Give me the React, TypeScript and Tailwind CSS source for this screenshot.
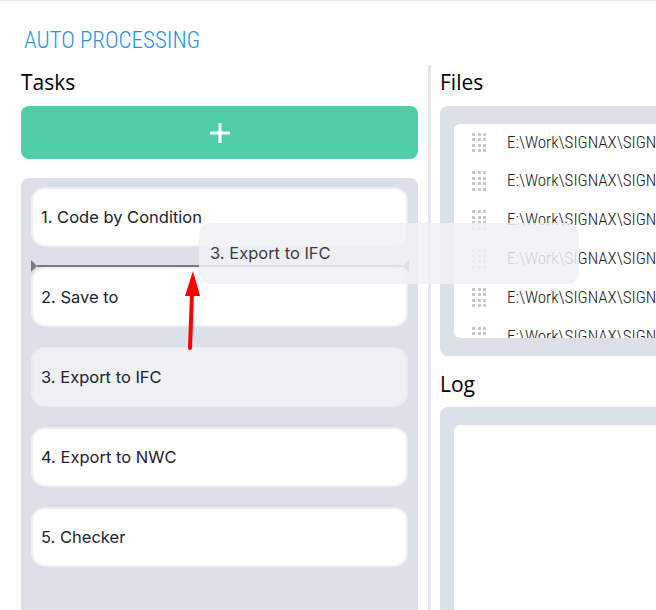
import React from 'react'

const tasks = ['1. Code by Condition', '2. Save to', '3. Export to IFC', '4. Export to NWC', '5. Checker']

const files = Array.from({ length: 6 }, (_, i) => `E:\\Work\\SIGNAX\\SIGNAX_Samples\\Project_0${i + 1}\\Model_0${i + 1}.rvt`)

const condensed = { fontFamily: '"Roboto Condensed", "Liberation Sans Narrow", "DejaVu Sans Condensed", "DejaVu Sans", sans-serif', fontStretch: 'condensed' as const }

function Grip() {
  return (
    <div className="grid grid-cols-3 gap-x-[2.5px] gap-y-[2.5px] w-[14px] shrink-0">
      {Array.from({ length: 12 }).map((_, i) => (
        <span key={i} className="w-[3px] h-[3px] bg-[#c6c8cd]" />
      ))}
    </div>
  )
}

function TaskItem({ label, placeholder }: { label: string; placeholder?: boolean }) {
  return (
    <div
      className={`h-[60px] rounded-[14px] border-2 flex items-center px-[8px] text-[16.5px] text-[#23232d] ${
        placeholder ? 'bg-[#eef0f4] border-[#e9ecf1]' : 'bg-white border-[#edf0f5]'
      }`}
      style={{ fontFamily: 'Inter, "Noto Sans", sans-serif' }}
    >
      {label}
    </div>
  )
}

export default function App() {
  return (
    <div className="relative w-[656px] h-[610px] overflow-hidden bg-white border-t border-[#e3e6eb]">
      <div
        className="pl-6 pt-[25px] text-[23px] leading-[30px] font-light text-[#2a93dc]"
        style={condensed}
      >
        AUTO PROCESSING
      </div>

      <div className="flex mt-[8px]" style={{ fontFamily: '"Open Sans", "Noto Sans", sans-serif' }}>
        {/* tasks column */}
        <div className="ml-[21px] w-[397px] shrink-0">
          <h2 className="h-[42px] text-[21px] leading-[36px] text-black">Tasks</h2>
          <button className="w-full h-[53px] rounded-[8px] bg-[#4fcea7] flex items-center justify-center">
            <svg width="24" height="24" viewBox="0 0 24 24">
              <path d="M12 2v20M2 12h20" stroke="#fff" strokeWidth="3" />
            </svg>
          </button>
          <div className="relative mt-[19px] h-[500px] rounded-t-[8px] bg-[#dce0e8] px-[10px] pt-[9px] flex flex-col gap-[20px]">
            {tasks.map((t, i) => (
              <TaskItem key={t} label={t} placeholder={i === 2} />
            ))}
            {/* drop indicator */}
            <div className="absolute left-[10px] right-[9px] top-[82px] h-[12px] flex items-center">
              <svg width="6" height="12" viewBox="0 0 6 12" className="shrink-0">
                <path d="M0 0L6 6L0 12Z" fill="#7a7a7a" />
              </svg>
              <div className="flex-1 h-[2px] bg-[#7a7a7a]" />
              <svg width="6" height="12" viewBox="0 0 6 12" className="shrink-0">
                <path d="M6 0L0 6L6 12Z" fill="#7a7a7a" />
              </svg>
            </div>
          </div>
        </div>

        <div className="ml-[10px] w-[3px] shrink-0 mt-[1px] bg-[#e4e7ee]" />

        {/* files + log column */}
        <div className="ml-[9px] w-[397px] shrink-0">
          <h2 className="h-[42px] text-[21px] leading-[36px] text-black">Files</h2>
          <div className="h-[250px] rounded-[8px] bg-[#dce0e8] px-[14px] py-[18px]">
            <div className="h-full rounded-[6px] bg-white overflow-hidden">
              {files.map((f) => (
                <div key={f} className="h-[38.8px] flex items-center gap-[21px] pl-[18px] pb-[2px] whitespace-nowrap">
                  <Grip />
                  <span className="text-[17px] text-[#202020] font-light" style={condensed}>
                    {f}
                  </span>
                </div>
              ))}
            </div>
          </div>
          <h2 className="h-[51px] pt-[10px] text-[21px] leading-[36px] text-black">Log</h2>
          <div className="h-[300px] rounded-t-[8px] bg-[#dce0e8] px-[14px] pt-[18px]">
            <div className="h-full rounded-t-[6px] bg-white" />
          </div>
        </div>
      </div>

      {/* dragged task */}
      <div
        className="absolute left-[199px] top-[222px] w-[380px] h-[61px] rounded-[12px] bg-[#eff1f5]/85 flex items-center pl-[11px] text-[16.5px] text-[#3d3d46]"
        style={{ fontFamily: 'Inter, "Noto Sans", sans-serif' }}
      >
        3. Export to IFC
      </div>

      {/* red pointer arrow */}
      <svg className="absolute left-[180px] top-[266px]" width="26" height="86" viewBox="0 0 26 86">
        <path d="M10 81L12 26" stroke="#ff0000" strokeWidth="4" strokeLinecap="round" />
        <path d="M13 4L20 29L5 29Z" fill="#ff0000" />
      </svg>
    </div>
  )
}
